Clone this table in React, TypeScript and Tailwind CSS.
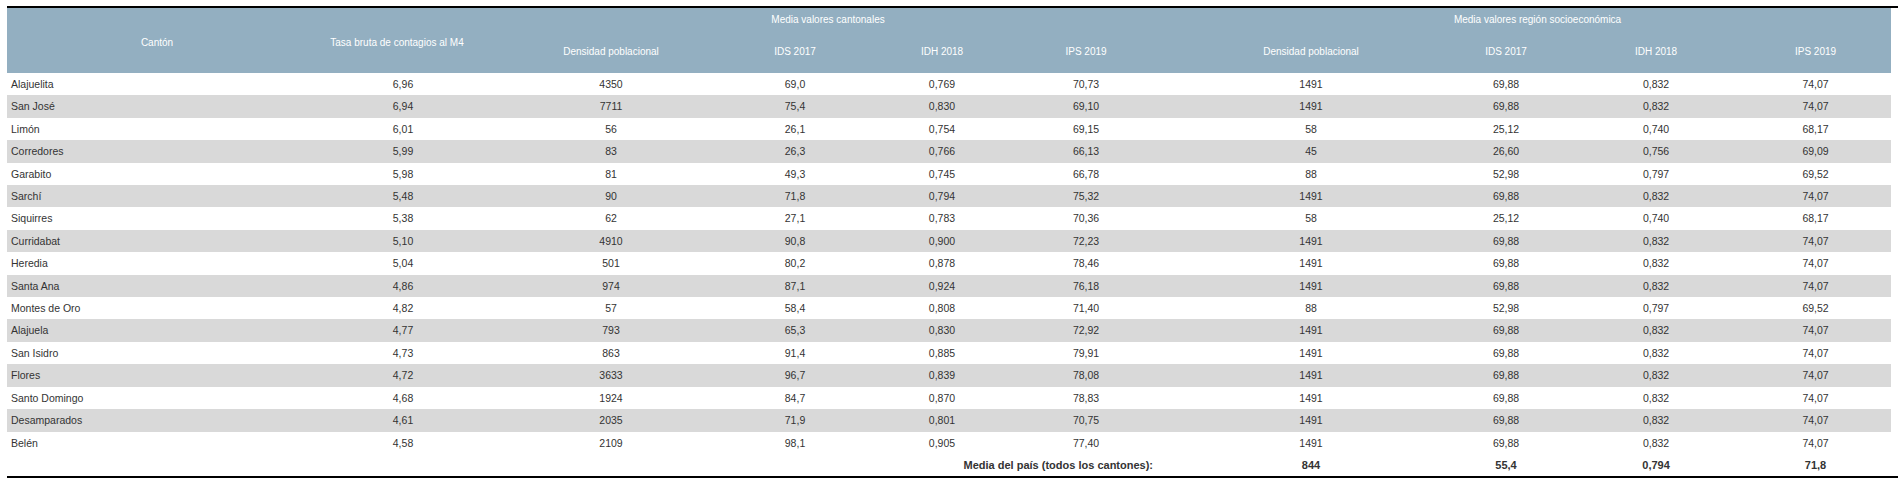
import React from "react";

const rows: string[][] = [
  ["Alajuelita", "6,96", "4350", "69,0", "0,769", "70,73", "1491", "69,88", "0,832", "74,07"],
  ["San José", "6,94", "7711", "75,4", "0,830", "69,10", "1491", "69,88", "0,832", "74,07"],
  ["Limón", "6,01", "56", "26,1", "0,754", "69,15", "58", "25,12", "0,740", "68,17"],
  ["Corredores", "5,99", "83", "26,3", "0,766", "66,13", "45", "26,60", "0,756", "69,09"],
  ["Garabito", "5,98", "81", "49,3", "0,745", "66,78", "88", "52,98", "0,797", "69,52"],
  ["Sarchí", "5,48", "90", "71,8", "0,794", "75,32", "1491", "69,88", "0,832", "74,07"],
  ["Siquirres", "5,38", "62", "27,1", "0,783", "70,36", "58", "25,12", "0,740", "68,17"],
  ["Curridabat", "5,10", "4910", "90,8", "0,900", "72,23", "1491", "69,88", "0,832", "74,07"],
  ["Heredia", "5,04", "501", "80,2", "0,878", "78,46", "1491", "69,88", "0,832", "74,07"],
  ["Santa Ana", "4,86", "974", "87,1", "0,924", "76,18", "1491", "69,88", "0,832", "74,07"],
  ["Montes de Oro", "4,82", "57", "58,4", "0,808", "71,40", "88", "52,98", "0,797", "69,52"],
  ["Alajuela", "4,77", "793", "65,3", "0,830", "72,92", "1491", "69,88", "0,832", "74,07"],
  ["San Isidro", "4,73", "863", "91,4", "0,885", "79,91", "1491", "69,88", "0,832", "74,07"],
  ["Flores", "4,72", "3633", "96,7", "0,839", "78,08", "1491", "69,88", "0,832", "74,07"],
  ["Santo Domingo", "4,68", "1924", "84,7", "0,870", "78,83", "1491", "69,88", "0,832", "74,07"],
  ["Desamparados", "4,61", "2035", "71,9", "0,801", "70,75", "1491", "69,88", "0,832", "74,07"],
  ["Belén", "4,58", "2109", "98,1", "0,905", "77,40", "1491", "69,88", "0,832", "74,07"],
];

const widths = [293, 206, 210, 158, 136, 152, 298, 92, 208, 131];

export default function App() {
  return (
    <div className="bg-white w-[1898px] h-[480px] pt-[6px]" style={{ fontFamily: '"Liberation Sans", Arial, sans-serif' }}>
      <div className="ml-[7px] border-t-2 border-b-2 border-black">
        <table className="table-fixed border-collapse w-[1884px] text-[#333]">
          <colgroup>
            {widths.map((w, i) => (
              <col key={i} style={{ width: w }} />
            ))}
          </colgroup>
          <thead className="bg-[#93afc1] text-white text-[10px] font-normal">
            <tr className="h-[22px]">
              <th rowSpan={2} className="font-normal text-center align-middle pl-[7px] pt-[3px]">Cantón</th>
              <th rowSpan={2} className="font-normal text-center align-middle pr-[12px] pt-[3px]">Tasa bruta de contagios al M4</th>
              <th colSpan={4} className="font-normal text-center align-middle pr-[12px]">Media valores cantonales</th>
              <th colSpan={4} className="font-normal text-center align-middle pl-[22px]">Media valores región socioeconómica</th>
            </tr>
            <tr className="h-[43px]">
              <th className="font-normal text-center">Densidad poblacional</th>
              <th className="font-normal text-center">IDS 2017</th>
              <th className="font-normal text-center">IDH 2018</th>
              <th className="font-normal text-center">IPS 2019</th>
              <th className="font-normal text-center">Densidad poblacional</th>
              <th className="font-normal text-center">IDS 2017</th>
              <th className="font-normal text-center">IDH 2018</th>
              <th className="font-normal text-center pr-[20px]">IPS 2019</th>
            </tr>
          </thead>
          <tbody className="text-[10.5px] leading-[12.4px]">
            {rows.map((r, i) => (
              <tr key={i} className={i % 2 === 1 ? "bg-[#d9d9d9]" : "bg-white"}>
                {r.map((c, j) => (
                  <td
                    key={j}
                    className={
                      j === 0
                        ? "text-left pl-[4px] py-[5px]"
                        : j === 9
                        ? "text-center py-[5px] pr-[20px]"
                        : "text-center py-[5px]"
                    }
                  >
                    {c}
                  </td>
                ))}
              </tr>
            ))}
            <tr className="bg-white font-bold text-[11px]">
              <td colSpan={6} className="text-right pr-[9px] py-[5px]">Media del país (todos los cantones):</td>
              <td className="text-center py-[5px]">844</td>
              <td className="text-center py-[5px]">55,4</td>
              <td className="text-center py-[5px]">0,794</td>
              <td className="text-center py-[5px] pr-[20px]">71,8</td>
            </tr>
          </tbody>
        </table>
      </div>
    </div>
  );
}
